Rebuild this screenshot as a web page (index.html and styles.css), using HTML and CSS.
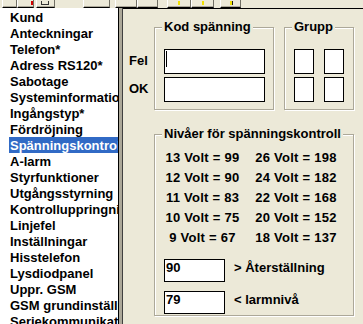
FILE: index.html
```html
<!DOCTYPE html>
<html lang="sv">
<head>
    <meta charset="UTF-8">
    <meta name="viewport" content="width=device-width, initial-scale=1.0">
    <title>Spänningskontroll</title>
    <link rel="stylesheet" href="styles.css">
</head>
<body>
    <div class="toolbar">
        <div class="tool tool-a"></div>
        <div class="tool tool-b"><span class="mark red"></span></div>
        <div class="tool tool-c"><span class="mark dark"></span></div>
        <div class="tool tool-d"></div>
        <div class="tool tool-e"></div>
        <div class="tool tool-f"></div>
        <div class="tool tool-g"><span class="mark yellow"></span></div>
        <div class="tool tool-h"><span class="mark yellow"></span></div>
        <div class="tool tool-i"><span class="mark yellow"></span></div>
    </div>

    <div class="main">
        <ul class="menu">
            <li>Kund</li>
            <li>Anteckningar</li>
            <li>Telefon*</li>
            <li>Adress RS120*</li>
            <li>Sabotage</li>
            <li>Systeminformation</li>
            <li>Ingångstyp*</li>
            <li>Fördröjning</li>
            <li class="selected">Spänningskontroll</li>
            <li>A-larm</li>
            <li>Styrfunktioner</li>
            <li>Utgångsstyrning</li>
            <li>Kontrolluppringning</li>
            <li>Linjefel</li>
            <li>Inställningar</li>
            <li>Hisstelefon</li>
            <li>Lysdiodpanel</li>
            <li>Uppr. GSM</li>
            <li>GSM grundinställningar</li>
            <li>Seriekommunikation</li>
        </ul>
        <div class="splitter"></div>

        <div class="pane">
            <div class="top-row">
                <div class="row-labels">
                    <div>Fel</div>
                    <div>OK</div>
                </div>
                <div class="group group-code">
                    <span class="legend">Kod spänning</span>
                    <div class="field field-code"><span class="caret"></span></div>
                    <div class="field field-code"></div>
                </div>
                <div class="group group-set">
                    <span class="legend">Grupp</span>
                    <div class="cells">
                        <div class="field cell"></div>
                        <div class="field cell"></div>
                        <div class="field cell"></div>
                        <div class="field cell"></div>
                    </div>
                </div>
            </div>

            <div class="group group-levels">
                <span class="legend">Nivåer för spänningskontroll</span>
                <div class="levels">
                    <div>13 Volt = 99</div><div>26 Volt = 198</div>
                    <div>12 Volt = 90</div><div>24 Volt = 182</div>
                    <div>11 Volt = 83</div><div>22 Volt = 168</div>
                    <div>10 Volt = 75</div><div>20 Volt = 152</div>
                    <div>9 Volt = 67</div><div>18 Volt = 137</div>
                </div>
                <div class="limit">
                    <div class="field field-limit">90</div>
                    <span class="limit-label">&gt; Återställning</span>
                </div>
                <div class="limit">
                    <div class="field field-limit">79</div>
                    <span class="limit-label">&lt; larmnivå</span>
                </div>
            </div>
        </div>
    </div>
</body>
</html>
```

FILE: styles.css
```css
* {
    box-sizing: border-box;
}
body {
    margin: 0;
    width: 363px;
    height: 324px;
    overflow: hidden;
    background-color: #ece9d8;
    font-family: "Liberation Sans", Arial, sans-serif;
    font-size: 13px;
    font-weight: bold;
    color: #000;
}

/* toolbar (only the lower edge is visible) */
.toolbar {
    display: flex;
    height: 8px;
}
.tool {
    position: relative;
    height: 8px;
    background-color: #ece9d8;
    border-left: 1px solid #fff;
    border-right: 1px solid #716f64;
    border-bottom: 1px solid #000;
    box-shadow: inset 0 -1px 0 #aca899;
}
.tool-a { margin-left: 2px; width: 15px; }
.tool-b { width: 17px; }
.tool-c { margin-left: 2px; width: 19px; }
.tool-d { margin-left: 28px; width: 27px; }
.tool-e { margin-left: 5px; width: 22px; }
.tool-f { width: 21px; }
.tool-g { margin-left: 9px; width: 24px; }
.tool-h { width: 23px; }
.tool-i { margin-left: 6px; width: 21px; }
.mark {
    position: absolute;
    top: 1px;
    width: 2px;
    height: 4px;
}
.mark.red { right: 0; background-color: #d40000; }
.mark.dark { left: 4px; width: 8px; border: 1px solid #333; border-top: none; }
.mark.yellow { left: 10px; background-color: #f0e000; }
.tool-i .mark.yellow { left: 9px; border-right: 1px solid #222; width: 3px; }

.main {
    display: flex;
    height: 316px;
}

/* navigation list */
.menu {
    width: 118px;
    margin: 0;
    padding: 1px 0 0;
    list-style: none;
    background-color: #fff;
    overflow: hidden;
}
.menu li {
    height: 16px;
    margin-left: 9px;
    padding: 1px 0 0 1px;
    line-height: 15px;
    white-space: nowrap;
    overflow: hidden;
}
.menu li.selected {
    background-color: #316ac5;
    color: #fff;
}
.splitter {
    width: 5px;
    background-color: #aca899;
    border-left: 1px solid #000;
    border-right: 1px solid #404040;
}

/* settings pane */
.pane {
    flex: 1;
    border-top: 1px solid #000;
    padding: 18px 0 0 6px;
}
.top-row {
    display: flex;
}
.row-labels {
    width: 25px;
    padding-top: 22px;
}
.row-labels div {
    line-height: 24px;
    margin-bottom: 4px;
}

.group {
    position: relative;
    border: 1px solid #aca899;
    box-shadow: inset 1px 1px 0 #fff, 1px 1px 0 #fff;
}
.legend {
    position: absolute;
    top: -9px;
    left: 7px;
    padding: 0 2px;
    line-height: 16px;
    white-space: nowrap;
    background-color: #ece9d8;
}
.field {
    background-color: #fff;
    border: 1px solid #000;
}

.group-code {
    width: 120px;
    height: 83px;
    padding: 21px 0 0 9px;
}
.field-code {
    width: 101px;
    height: 25px;
    margin-bottom: 3px;
}
.caret {
    display: block;
    width: 1px;
    height: 16px;
    margin: 1px 0 0 1px;
    background-color: #000;
}

.group-set {
    width: 70px;
    height: 83px;
    margin-left: 10px;
    padding: 21px 0 0 9px;
}
.cells {
    display: grid;
    grid-template-columns: 20px 20px;
    column-gap: 10px;
    row-gap: 3px;
}
.cell {
    height: 25px;
}

.group-levels {
    width: 200px;
    height: 182px;
    margin: 24px 0 0 25px;
    padding: 13px 0 0 5px;
}
.levels {
    display: grid;
    grid-template-columns: 85px 102px;
    line-height: 20px;
    text-align: center;
    letter-spacing: 0.25px;
}
.limit {
    display: flex;
    align-items: flex-start;
    margin: 11px 0 0 4px;
}
.limit + .limit {
    margin-top: 9px;
}
.field-limit {
    width: 61px;
    height: 23px;
    padding: 0 1px;
    line-height: 16px;
}
.limit-label {
    margin-left: 9px;
    padding-top: 1px;
    line-height: 16px;
}
```
